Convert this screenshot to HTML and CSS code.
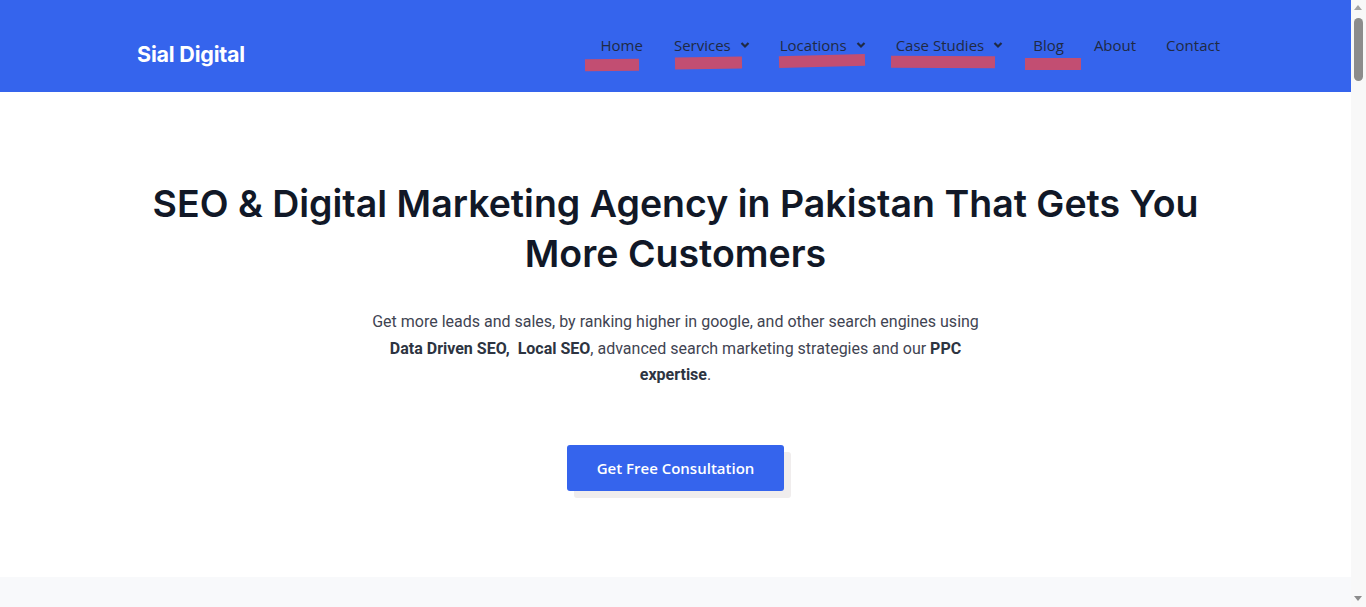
FILE: index.html
```html
<!DOCTYPE html>
<html lang="en">
<head>
<meta charset="utf-8">
<title>Sial Digital</title>
<link rel="stylesheet" href="styles.css">
</head>
<body>
<header class="site-header">
  <div class="header-inner">
    <a class="logo" href="#">Sial Digital</a>
    <nav class="main-nav">
      <a class="nav-item" href="#">Home<span class="mark mark-home"></span></a>
      <a class="nav-item" href="#">Services<svg class="chev" viewBox="0 0 10 8" width="10" height="8"><path d="M1.5 2 L5 5.5 L8.5 2" fill="none" stroke="currentColor" stroke-width="2.2"/></svg><span class="mark mark-services"></span></a>
      <a class="nav-item" href="#">Locations<svg class="chev" viewBox="0 0 10 8" width="10" height="8"><path d="M1.5 2 L5 5.5 L8.5 2" fill="none" stroke="currentColor" stroke-width="2.2"/></svg><span class="mark mark-locations"></span></a>
      <a class="nav-item" href="#">Case Studies<svg class="chev" viewBox="0 0 10 8" width="10" height="8"><path d="M1.5 2 L5 5.5 L8.5 2" fill="none" stroke="currentColor" stroke-width="2.2"/></svg><span class="mark mark-case"></span></a>
      <a class="nav-item" href="#">Blog<span class="mark mark-blog"></span></a>
      <a class="nav-item" href="#">About</a>
      <a class="nav-item" href="#">Contact</a>
    </nav>
  </div>
</header>
<main>
  <section class="hero">
    <h1 class="hero-title">SEO &amp; Digital Marketing Agency in Pakistan That Gets You More Customers</h1>
    <p class="hero-text">Get more leads and sales, by ranking higher in google, and other search engines using <strong>Data Driven SEO,&nbsp; Local SEO</strong>, advanced search marketing strategies and our <strong>PPC expertise</strong>.</p>
    <a class="cta" href="#">Get Free Consultation</a>
  </section>
  <section class="next-section"></section>
</main>
<div class="scrollbar" aria-hidden="true">
  <span class="sb-arrow sb-up"></span>
  <span class="sb-thumb"></span>
  <span class="sb-arrow sb-down"></span>
</div>
</body>
</html>
```
FILE: styles.css
```css
* { box-sizing: border-box; }
html, body { margin: 0; padding: 0; }
body {
  background: #ffffff;
  font-family: "Open Sans", "Noto Sans", sans-serif;
  color: #1f2937;
  margin-right: 15px;
}
a { text-decoration: none; }

.site-header {
  background: #3564ed;
  height: 92px;
}
.header-inner {
  height: 100%;
  display: flex;
  align-items: center;
  justify-content: space-between;
  padding: 0 131px 0 137px;
}
.logo {
  font-family: "Inter", "Noto Sans", sans-serif;
  font-weight: 700;
  font-size: 21.5px;
  color: #ffffff;
  margin-top: 16px;
  letter-spacing: -0.2px;
}
.main-nav {
  display: flex;
  align-items: center;
  gap: 30px;
  margin-top: -3px;
}
.nav-item {
  position: relative;
  display: flex;
  align-items: center;
  font-size: 15px;
  color: #1f2a44;
}
.nav-item:first-child { margin-right: 1px; }
.chev { margin-left: 9px; color: #1f2a44; }

.mark {
  position: absolute;
  background: #c24e72;
  height: 12px;
}
.mark-home { left: -16px; width: 54px; top: 24px; transform: rotate(-0.5deg); }
.mark-services { left: 1px; width: 67px; top: 22px; transform: rotate(-1deg); }
.mark-locations { left: -1px; width: 86px; top: 20px; transform: rotate(-1.5deg); }
.mark-case { left: -5px; width: 104px; top: 21px; transform: rotate(0.4deg); }
.mark-blog { left: -8px; width: 56px; top: 23px; }

.hero {
  display: flex;
  flex-direction: column;
  align-items: center;
  padding: 87px 0 86px;
}
.hero-title {
  margin: 0;
  max-width: 1100px;
  font-family: "Inter", "Noto Sans", sans-serif;
  font-weight: 600;
  font-size: 37.5px;
  line-height: 50px;
  text-align: center;
  color: #111827;
}
.hero-text {
  margin: 30px 0 0;
  max-width: 620px;
  font-family: "Roboto", "Liberation Sans", sans-serif;
  font-size: 16px;
  line-height: 26.5px;
  text-align: center;
  color: #3f4452;
}
.hero-text strong { color: #2d3441; font-weight: 700; }
.cta {
  margin-top: 56px;
  display: inline-flex;
  align-items: center;
  justify-content: center;
  width: 217px;
  height: 46px;
  background: #3564ed;
  color: #ffffff;
  border-radius: 3px;
  font-family: "Open Sans", "Noto Sans", sans-serif;
  font-weight: 600;
  font-size: 15px;
  box-shadow: 7px 7px 0 0 #f0eded;
}
.next-section {
  background: #f8f9fb;
  height: 500px;
}

.scrollbar {
  position: fixed;
  top: 0;
  right: 0;
  width: 15px;
  height: 100vh;
  background: #f8f8f8;
}
.sb-thumb {
  position: absolute;
  left: 3px;
  top: 18px;
  width: 9px;
  height: 63px;
  border-radius: 5px;
  background: #8c8c8c;
}
.sb-arrow {
  position: absolute;
  left: 3px;
  width: 0;
  height: 0;
  border-left: 4.5px solid transparent;
  border-right: 4.5px solid transparent;
}
.sb-up { top: 5px; border-bottom: 5px solid #a3a3a3; }
.sb-down { bottom: 6px; border-top: 5px solid #8c8c8c; }
```
